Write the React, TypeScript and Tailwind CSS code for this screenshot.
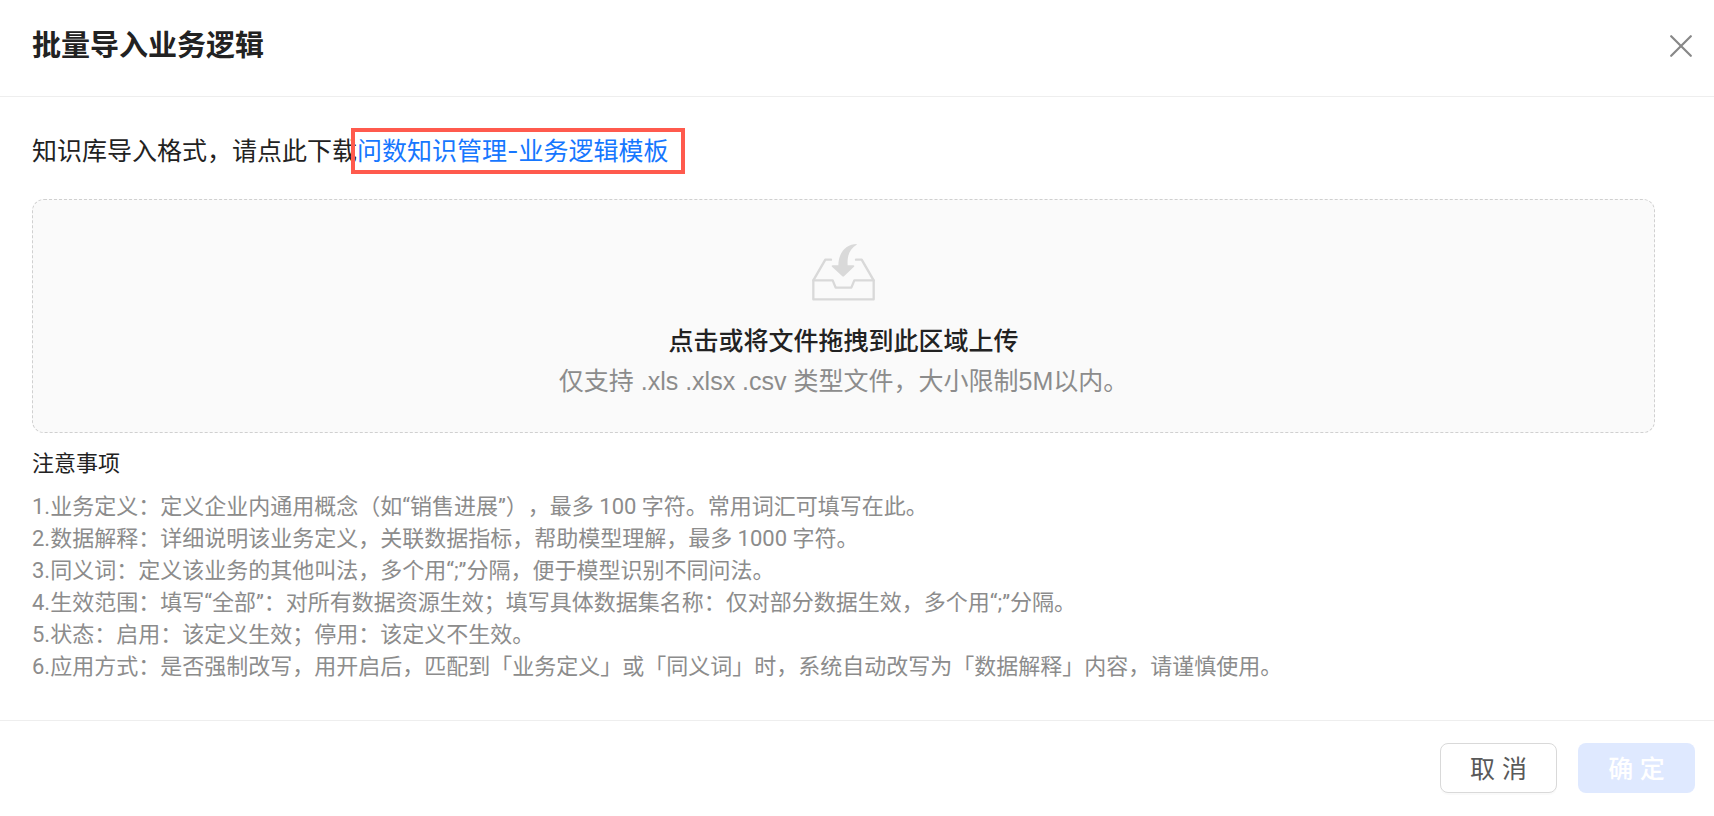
import React, { useState } from "react"

const notes = [
  "1.业务定义：定义企业内通用概念（如“销售进展”），最多 100 字符。常用词汇可填写在此。",
  "2.数据解释：详细说明该业务定义，关联数据指标，帮助模型理解，最多 1000 字符。",
  "3.同义词：定义该业务的其他叫法，多个用“;”分隔，便于模型识别不同问法。",
  "4.生效范围：填写“全部”：对所有数据资源生效；填写具体数据集名称：仅对部分数据生效，多个用“;”分隔。",
  "5.状态：启用：该定义生效；停用：该定义不生效。",
  "6.应用方式：是否强制改写，用开启后，匹配到「业务定义」或「同义词」时，系统自动改写为「数据解释」内容，请谨慎使用。",
]

function CloseIcon() {
  return (
    <svg width="22" height="22" viewBox="0 0 22 22" fill="none" stroke="#888888" strokeWidth="2.2" strokeLinecap="round">
      <path d="M1.2 1.2 20.8 20.8M20.8 1.2 1.2 20.8" />
    </svg>
  )
}

function InboxIcon() {
  return (
    <svg width="67" height="60" viewBox="60 50 201 180" fill="none" aria-hidden="true">
      <g stroke="#d9d9d9" strokeWidth="7" strokeLinecap="round" strokeLinejoin="round">
        <path d="M123 103H106L70 165V222H251V165L215 103H198" />
        <path d="M70 165H128L137 187H184L193 165H251" />
      </g>
      <path
        d="M200 56C172 57 146 76 145 120H128C125 120 124 122 126 124L157 153Q159 155 162 153L192 124C194 122 193 120 190 120H173C171 92 178 71 200 58Z"
        fill="#d9d9d9"
      />
    </svg>
  )
}

function UploadArea() {
  const [fileName, setFileName] = useState("")

  return (
    <label className="flex cursor-pointer flex-col items-center rounded-xl border border-dashed border-[#d0d0d0] bg-[#fafafa] pt-[42px] pb-[31px]">
      <input
        type="file"
        accept=".xls,.xlsx,.csv"
        className="sr-only"
        onChange={(e) => setFileName(e.target.files?.[0]?.name ?? "")}
      />
      <InboxIcon />
      <span className="mt-[19px] text-[25px] leading-10 font-medium text-[#222222]">
        {fileName || "点击或将文件拖拽到此区域上传"}
      </span>
      <span className="font-['Liberation_Sans','Noto_Sans_CJK_SC',sans-serif] text-[25px] leading-10 text-[#8c8c8c]">
        仅支持 .xls .xlsx .csv 类型文件，大小限制5M以内。
      </span>
    </label>
  )
}

function App() {
  return (
    <div
      role="dialog"
      aria-labelledby="import-title"
      className="bg-white font-['Inter','Noto_Sans_CJK_SC',sans-serif] text-[25px] text-[#222222] [text-spacing-trim:space-all]"
    >
      <header className="flex items-center justify-between border-b border-[#eeeeee] pt-[22px] pr-[22px] pb-[26px] pl-8">
        <h1 id="import-title" className="text-[29px] leading-[48px] font-bold">批量导入业务逻辑</h1>
        <button type="button" aria-label="关闭">
          <CloseIcon />
        </button>
      </header>

      <main className="pt-[34px] pr-[59px] pb-[37px] pl-8">
        <p className="mb-7 leading-10">
          知识库导入格式，请点此下载
          <a href="#template" className="relative inline-block text-[#1677ff]">
            问数知识管理-业务逻辑模板
            <span className="absolute -inset-y-[3px] -right-4 -left-1.5 border-4 border-[#ff5a4d]" />
          </a>
        </p>

        <UploadArea />

        <h2 className="mt-[14px] mb-3 text-[22px] leading-8">注意事项</h2>
        <ul className="font-['Roboto','Noto_Sans_CJK_SC',sans-serif] text-[22px] leading-8 text-[#8c8c8c]">
          {notes.map((note) => (
            <li key={note}>{note}</li>
          ))}
        </ul>
      </main>

      <footer className="flex justify-end gap-[21px] border-t border-[#eeeeee] py-[22px] pr-[19px]">
        <button
          type="button"
          className="h-[50px] w-[117px] rounded-lg border border-[#d9d9d9] bg-white pt-1 text-[#595959] shadow-[0_2px_0_rgba(0,0,0,0.02)]"
        >
          取 消
        </button>
        <button type="button" disabled className="h-[50px] w-[117px] rounded-lg bg-[#dfe9ff] pt-1 font-medium text-white">
          确 定
        </button>
      </footer>
    </div>
  )
}

export default App
